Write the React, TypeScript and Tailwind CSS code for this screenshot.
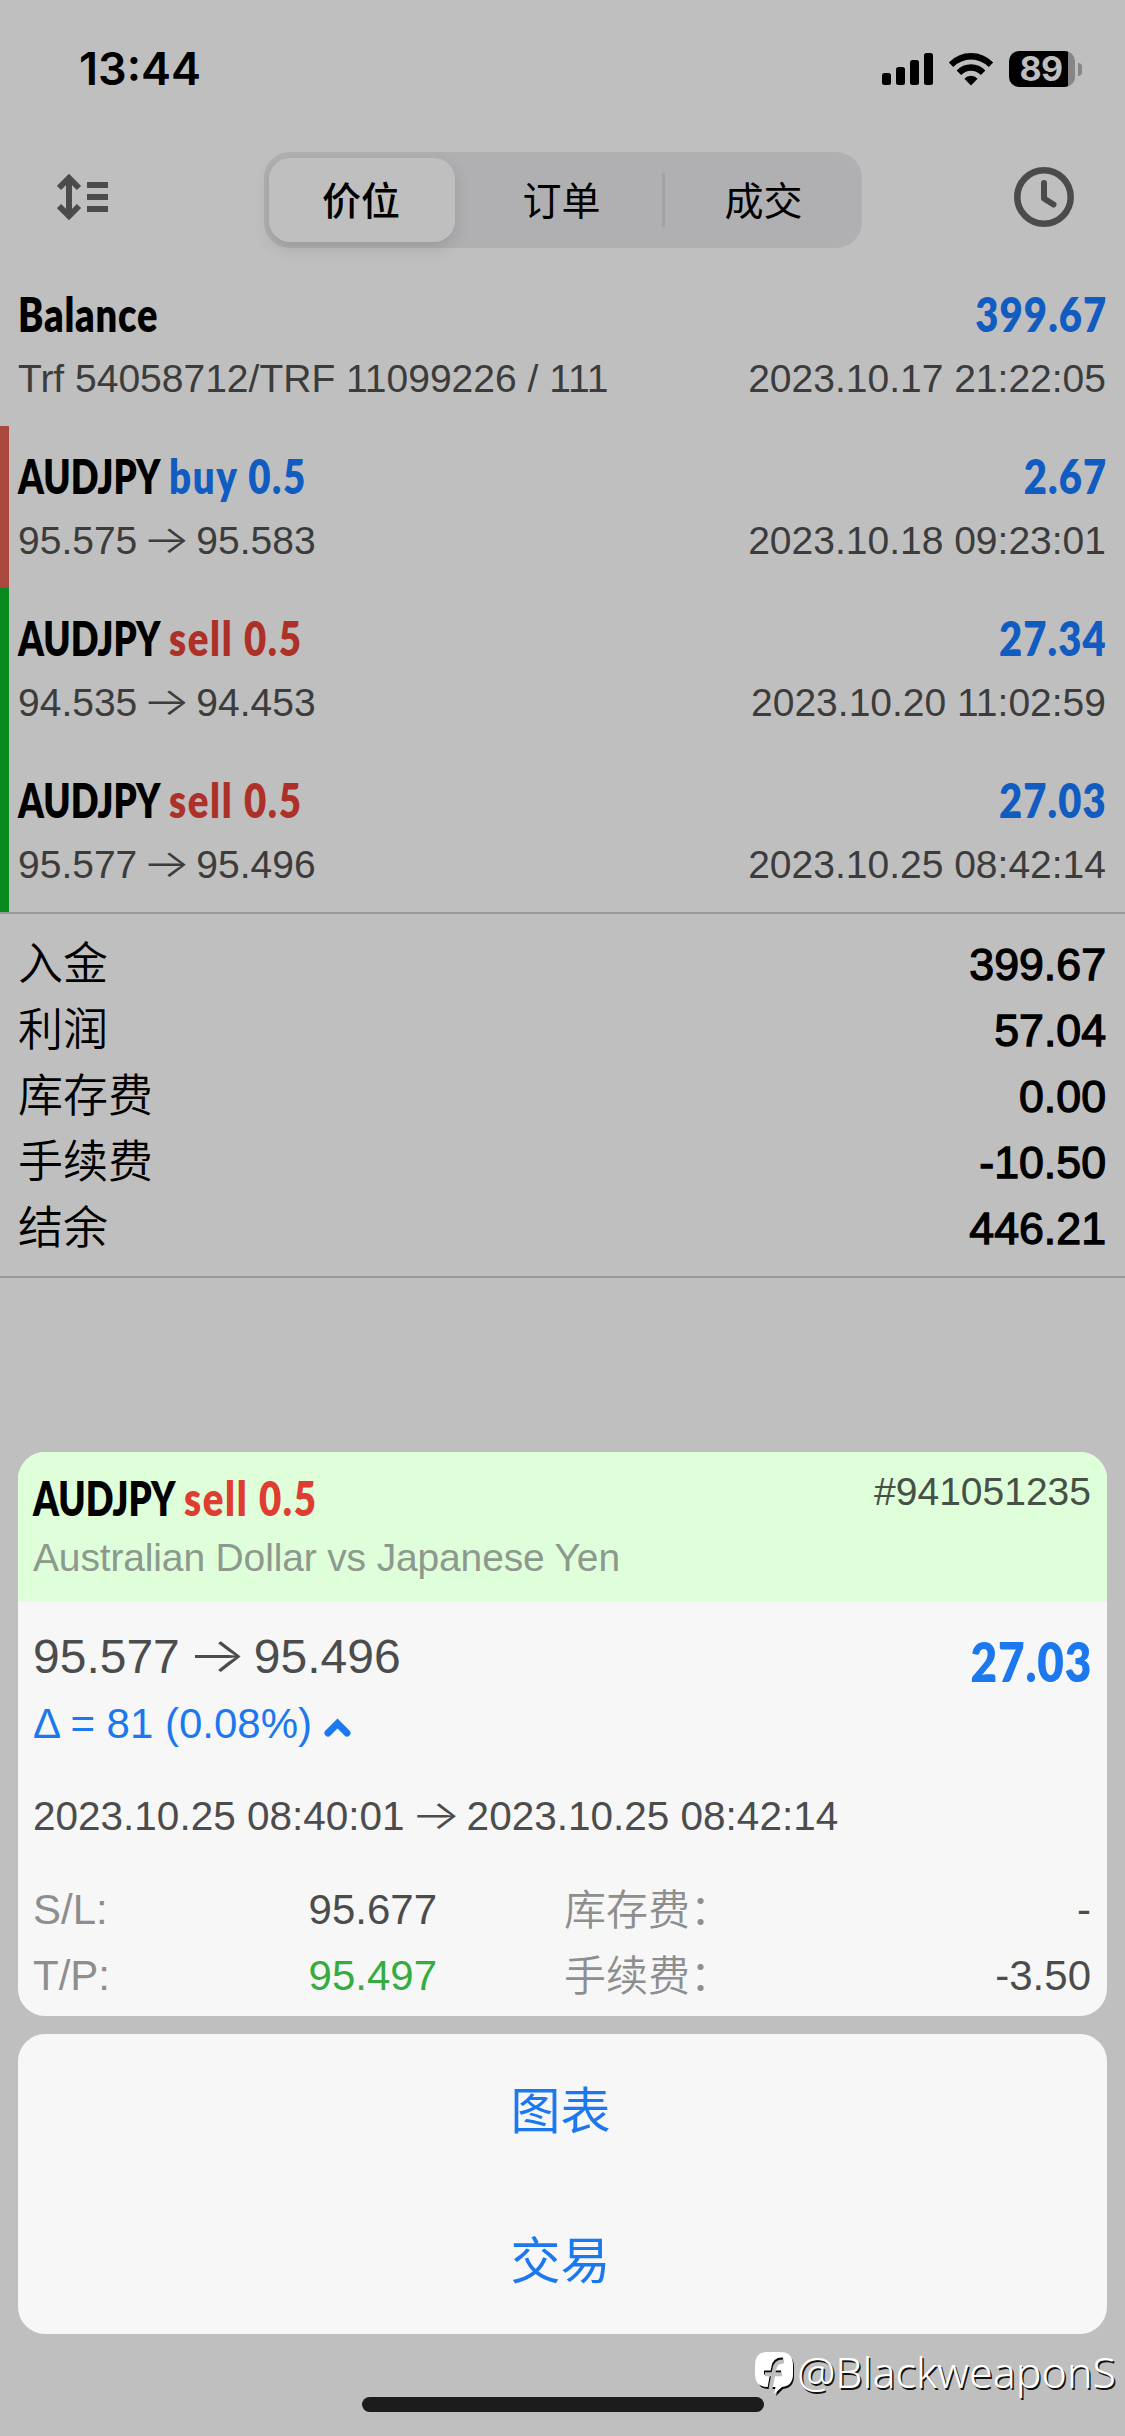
import React from "react";

type Deal = {
  title: string;
  side?: "buy" | "sell";
  sideClass?: string;
  amount: string;
  from?: string;
  to?: string;
  note?: string;
  time: string;
  bar: string;
};

const deals: Deal[] = [
  { title: "Balance", amount: "399.67", note: "Trf 54058712/TRF 11099226 / 111", time: "2023.10.17 21:22:05", bar: "bg-transparent" },
  { title: "AUDJPY", side: "buy", sideClass: "text-[#115cc0]", amount: "2.67", from: "95.575", to: "95.583", time: "2023.10.18 09:23:01", bar: "bg-[#a9483c]" },
  { title: "AUDJPY", side: "sell", sideClass: "text-[#ad3128]", amount: "27.34", from: "94.535", to: "94.453", time: "2023.10.20 11:02:59", bar: "bg-[#0a8a1e]" },
  { title: "AUDJPY", side: "sell", sideClass: "text-[#ad3128]", amount: "27.03", from: "95.577", to: "95.496", time: "2023.10.25 08:42:14", bar: "bg-[#0a8a1e]" },
];

const totals = [
  ["入金", "399.67"],
  ["利润", "57.04"],
  ["库存费", "0.00"],
  ["手续费", "-10.50"],
  ["结余", "446.21"],
];

function Arrow({ className }: { className: string }) {
  return (
    <span className={"inline-flex scale-x-[1.3] justify-center font-['Inter'] text-[1em] leading-[0] font-light align-[0.03em] " + className}>→</span>
  );
}

function Symbol({ title, side, sideClass }: { title: string; side?: string; sideClass?: string }) {
  return (
    <div className="flex h-[60px] font-['Lato'] text-[47.5px] leading-[60px] font-extrabold whitespace-nowrap">
      <span className={side ? "w-[151px]" : ""}>
        <span className={"inline-block origin-left text-black " + (side ? "scale-x-[0.77]" : "scale-x-[0.8] tracking-[1px]")}>{title}</span>
      </span>
      {side && <span className={"inline-block origin-left scale-x-[0.81] tracking-[2px] " + sideClass}>{side} 0.5</span>}
    </div>
  );
}

function StatusBar() {
  return (
    <div className="flex h-[138px] items-center justify-between pl-[79px] pr-[43px]">
      <div className="font-['Inter'] text-[45px] leading-[54px] font-semibold text-black">13:44</div>
      <div className="flex items-center gap-[15px]">
        <svg width="51" height="32" viewBox="0 0 51 32">
          <rect x="0" y="20" width="9" height="12" rx="2.5" />
          <rect x="14" y="14" width="9" height="18" rx="2.5" />
          <rect x="28" y="7" width="9" height="25" rx="2.5" />
          <rect x="42" y="0" width="9" height="32" rx="2.5" />
        </svg>
        <svg width="46" height="34" viewBox="0 0 46 34">
          <path d="M.8 10.500Q10 1 23 1t22.200 9.500l-4.400 4.500Q33 7.500 23 7.500T5.200 15z" />
          <path d="M8.600 18.500Q14.500 12.200 23 12.200t14.400 6.300l-4.500 4.500Q28.500 18.700 23 18.700T13.100 23z" />
          <path d="M16.400 26.700Q19 23.700 23 23.700t6.600 3L23 33.500z" />
        </svg>
        <div className="flex items-center gap-[3px]">
          <div className="flex h-[36px] w-[66px] items-center justify-center rounded-[10px] bg-[linear-gradient(90deg,#000_0,#000_59px,#868686_59px)] pr-[2px] font-['Inter'] text-[34px] leading-[36px] font-bold text-[#bfbfbf]">
            <span className="tracking-[-0.5px]">89</span>
          </div>
          <div className="h-[13px] w-[4px] rounded-r-full bg-[#868686]" />
        </div>
      </div>
    </div>
  );
}

function Header() {
  return (
    <div className="flex h-[126px] items-start justify-between pl-[57px] pr-[51px]">
      <svg className="mt-[35px]" width="51" height="48" viewBox="0 0 51 48" fill="none" stroke="#4b4b4b" strokeWidth="6">
        <path d="M12 4v40M2 15l10-10 10 10M2 33l10 10 10-10" />
        <path d="M30 12h21M30 24h21M30 36h21" />
      </svg>
      <div className="ml-[4px] mt-[14px] flex h-[96px] w-[598px] items-center rounded-[26px] bg-[#b0b0b2] font-['Noto_Sans_CJK_SC',sans-serif] text-[39px] text-black">
        <div className="ml-[5px] flex h-[84px] w-[186px] items-center justify-center rounded-[21px] bg-[#bfbfbf] pr-[2px] pb-[4px] font-medium shadow-[0_6px_16px_rgba(0,0,0,0.12)]">价位</div>
        <div className="flex h-[54px] w-[210px] items-center justify-center border-r-[3px] border-[#a2a2a5] pb-[4px] pl-[6px]">订单</div>
        <div className="flex flex-1 items-center justify-center pb-[4px]">成交</div>
      </div>
      <svg className="mt-[29px]" width="60" height="60" viewBox="0 0 60 60" fill="none" stroke="#4b4b4b" strokeLinecap="round" strokeLinejoin="round">
        <circle cx="30" cy="30" r="26.700" strokeWidth="6.500" />
        <path d="M30 16v15.500l9.500 6" strokeWidth="6" />
      </svg>
    </div>
  );
}

function DealRow({ d }: { d: Deal }) {
  return (
    <div className="flex h-[162px]">
      <div className={"w-[9px] " + d.bar} />
      <div className="flex flex-1 flex-col pt-[20px] pr-[19px] pl-[9px]">
        <div className="flex justify-between">
          <Symbol title={d.title} side={d.side} sideClass={d.sideClass} />
          <span className="-mr-[1px] origin-right scale-x-[0.85] font-['Lato'] text-[47px] leading-[60px] font-extrabold tracking-[1.3px] text-[#115cc0]">{d.amount}</span>
        </div>
        <div className="flex justify-between pt-[12px] text-[39px] leading-[46px] text-[#3c3c3c]">
          <span className="whitespace-nowrap">
            {d.note ?? (
              <>
                {d.from}
                <Arrow className="w-[59px]" />
                {d.to}
              </>
            )}
          </span>
          <span>{d.time}</span>
        </div>
      </div>
    </div>
  );
}

function Totals() {
  return (
    <div className="h-[366px] border-y-2 border-[#999] pt-[14px] pr-[19px] pl-[18px] text-black">
      {totals.map(([k, v]) => (
        <div key={k} className="flex h-[66px] items-center justify-between text-[45px] leading-[66px]">
          <span className="font-['Noto_Sans_CJK_SC',sans-serif] font-[350]">{k}</span>
          <span className="pt-[8px] text-[44.7px] [-webkit-text-stroke:1.3px_black]">{v}</span>
        </div>
      ))}
    </div>
  );
}

function DetailCard() {
  return (
    <div className="h-[564px] overflow-hidden rounded-[27px] bg-[#f7f7f7] text-[#4c4c4d]">
      <div className="flex h-[150px] justify-between bg-[#deffda] pt-[16px] pr-[16px] pl-[15px]">
        <div>
          <Symbol title="AUDJPY" side="sell" sideClass="text-[#df3d31]" />
          <div className="pt-[7px] text-[39px] leading-[46px] tracking-[-0.15px] text-[#8e998e]">Australian Dollar vs Japanese Yen</div>
        </div>
        <div className="pt-[1px] text-[39px] leading-[46px] text-[#465046]">#941051235</div>
      </div>
      <div className="flex h-[162px] justify-between pt-[27px] pr-[16px] pl-[15px]">
        <div>
          <div className="text-[48px] leading-[56px] whitespace-nowrap">
            95.577
            <Arrow className="w-[74px]" />
            95.496
          </div>
          <div className="flex items-center gap-[12px] pt-[14px] text-[42px] leading-[50px] text-[#1b78ee]">
            <span>Δ = 81 (0.08%)</span>
            <svg className="mt-[6px]" width="27" height="19" viewBox="0 0 27 19" fill="none" stroke="#1b78ee" strokeWidth="7" strokeLinecap="round" strokeLinejoin="miter">
              <path d="M4 15l9.500-9.500L23 15" />
            </svg>
          </div>
        </div>
        <div className="-mr-[1px] origin-right scale-x-[0.85] pt-[1px] font-['Lato'] text-[54px] leading-[64px] font-extrabold tracking-[1px] text-[#1b78ee]">27.03</div>
      </div>
      <div className="pt-[27px] pl-[15px] text-[40.5px] leading-[50px] whitespace-nowrap">
        2023.10.25 08:40:01
        <Arrow className="w-[62px]" />
        2023.10.25 08:42:14
      </div>
      <div className="grid grid-cols-[243px_161px_1fr] pt-[36px] pr-[16px] pl-[15px] text-[42px] leading-[66px]">
        <span className="text-[#8e8e8f]">S/L:</span>
        <span className="text-right">95.677</span>
        <span className="flex h-[66px] justify-between pl-[127px]">
          <span className="-mt-[3px] font-['Noto_Sans_CJK_SC',sans-serif] font-[350] text-[#8e8e8f]">库存费：</span>
          <span>-</span>
        </span>
        <span className="text-[#8e8e8f]">T/P:</span>
        <span className="text-right text-[#34ac40]">95.497</span>
        <span className="flex h-[66px] justify-between pl-[127px]">
          <span className="-mt-[3px] font-['Noto_Sans_CJK_SC',sans-serif] font-[350] text-[#8e8e8f]">手续费：</span>
          <span>-3.50</span>
        </span>
      </div>
    </div>
  );
}

export default function App() {
  return (
    <div className="relative h-[2436px] w-[1125px] overflow-hidden bg-[#bfbfbf] font-['Liberation_Sans',sans-serif]">
      <StatusBar />
      <Header />
      {deals.map((d) => (
        <DealRow key={d.time} d={d} />
      ))}
      <Totals />
      <div className="mt-[174px] flex flex-col gap-[18px] px-[18px]">
        <DetailCard />
        <div className="grid h-[300px] grid-rows-2 place-items-center rounded-[27px] bg-[#f7f7f7] pr-[4px] font-['Noto_Sans_CJK_SC',sans-serif] text-[50px] text-[#1b78ee]">
          <button className="pb-[4px]">图表</button>
          <button className="pb-[4px]">交易</button>
        </div>
      </div>
      <div className="mx-auto mt-[63px] h-[15px] w-[402px] rounded-full bg-[#1c1c1c]" />
      <div className="absolute right-[9px] bottom-[36px] flex items-center gap-[1px]">
        <svg className="mt-[3px]" width="41" height="47" viewBox="0 0 41 47">
          <path d="M13 4h13q13 0 13 13v9q0 12-11 13l-7 7 1.500-7H13Q2 39 2 26v-9Q2 4 13 4z" fill="#0a0a0a" />
          <path d="M12 2h13q13 0 13 13v9q0 12-11 13l-8 7 1.500-7H12Q0 37 0 24v-9Q0 2 12 2z" fill="#fff" />
          <path d="M28 9.500q-8.500-.5-9.800 8L14.500 38M9 22.500h17" fill="none" stroke="#0a0a0a" strokeWidth="4" />
          <path d="M29 11.500q-8.500-.5-9.800 8L15.500 39M10 24.300h17" fill="none" stroke="#bfbfbf" strokeWidth="4" />
        </svg>
        <span className="font-['Noto_Sans'] text-[43px] leading-[56px] font-light text-white [text-shadow:1.5px_1.5px_0_#111]">@BlackweaponS</span>
      </div>
    </div>
  );
}
